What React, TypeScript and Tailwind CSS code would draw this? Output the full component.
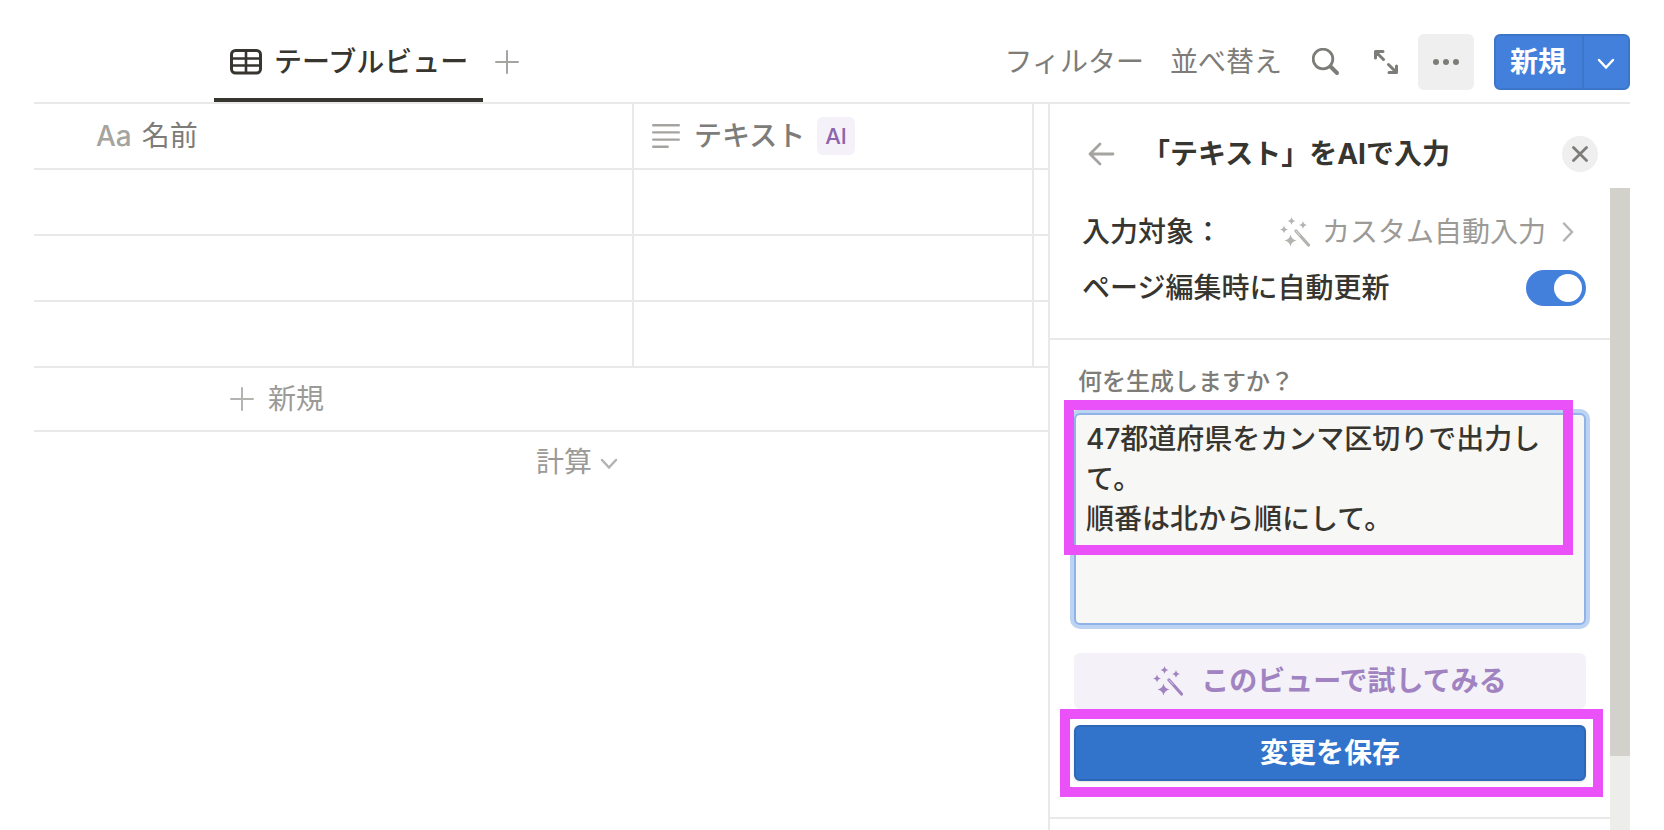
import React, { useState } from 'react';

const ROWS = [1, 2, 3];

function TableIcon() {
  return (
    <svg viewBox="0 0 32 26" className="h-[26px] w-8" fill="none" stroke="currentColor" strokeWidth="3">
      <rect x="1.5" y="1.5" width="29" height="22.5" rx="4" />
      <path d="M2 9.5h28M2 16.5h28M16 2v22" strokeWidth="2.6" />
    </svg>
  );
}

function PlusIcon() {
  return (
    <svg viewBox="0 0 24 24" className="size-6" fill="none" stroke="currentColor" strokeWidth="2" strokeLinecap="round">
      <path d="M12 1v22M1 12h22" />
    </svg>
  );
}

function ChevronDown({ className = '' }: { className?: string }) {
  return (
    <svg viewBox="0 0 18 12" className={`h-3 w-[18px] ${className}`} fill="none" stroke="currentColor" strokeLinecap="round">
      <path d="M2 2l7 7.5L16 2" />
    </svg>
  );
}

function WandIcon() {
  return (
    <svg viewBox="0 0 30 30" className="size-[30px] shrink-0" fill="currentColor">
      <path d="M11.5 0q.6 3.4 4 4q-3.4.6-4 4q-.6-3.4-4-4q3.4-.6 4-4z" />
      <path d="M23 4q.6 3.4 4 4q-3.4.6-4 4q-.6-3.4-4-4q3.4-.6 4-4z" />
      <path d="M4 8.500q.6 3.400 4 4q-3.400.6-4 4q-.6-3.400-4-4q3.400-.6 4-4z" />
      <path d="M10.500 17.500q1 5 6 6q-5 1-6 6q-1-5-6-6q5-1 6-6z" />
      <path d="M16 14L28.500 28" fill="none" stroke="currentColor" strokeWidth="3.200" strokeLinecap="round" />
      <path d="M16 14L20 18.500" fill="none" stroke="white" strokeOpacity=".6" strokeWidth="1" strokeLinecap="round" />
    </svg>
  );
}

function Toolbar() {
  return (
    <header className="flex h-[104px] items-center border-b-2 border-[#e9e9e7] pt-[22px]">
      <div className="ml-[180px] flex h-full flex-col">
        <button className="flex flex-1 items-center gap-3 border-b-4 border-[#37352f] pt-1 pr-[15px] pl-4 font-medium">
          <TableIcon />
          テーブルビュー
        </button>
      </div>
      <button aria-label="ビューを追加" className="ml-3 text-[#a5a4a0]">
        <PlusIcon />
      </button>

      <div className="ml-auto flex items-center text-[#7d7c78]">
        <button>フィルター</button>
        <button className="ml-[26px]">並べ替え</button>
        <button aria-label="検索" className="ml-[30px]">
          <svg viewBox="0 0 28 28" className="size-7" fill="none" stroke="currentColor" strokeLinecap="round">
            <circle cx="11" cy="11" r="9.800" strokeWidth="2.800" />
            <path d="M18.500 18.500l6.500 6.500" strokeWidth="4" />
          </svg>
        </button>
        <button aria-label="全画面で開く" className="ml-[34px]">
          <svg viewBox="0 0 24 24" className="size-6" fill="none" stroke="currentColor" strokeWidth="3" strokeLinecap="round" strokeLinejoin="round">
            <path d="M9.500 9.500L2 2M1.500 8V1.500H9M14.500 14.500L22 22M22.500 16v6.500H15" />
          </svg>
        </button>
        <button aria-label="その他" className="ml-5 flex size-14 items-center justify-center rounded-md bg-[#efefef]">
          <svg viewBox="0 0 26 6" className="h-1.5 w-[26px]" fill="currentColor">
            <circle cx="3" cy="3" r="3" />
            <circle cx="13" cy="3" r="3" />
            <circle cx="23" cy="3" r="3" />
          </svg>
        </button>
        <div className="ml-5 flex h-14 overflow-hidden rounded-md border-2 border-[#3b76c9] bg-[#4380dc] text-white">
          <button className="pr-4 pl-3.5 font-bold">新規</button>
          <button aria-label="テンプレートを選択" className="flex w-[46px] items-center justify-center border-l-2 border-[#3b76c9]">
            <ChevronDown className="mt-1 stroke-[2.5]" />
          </button>
        </div>
      </div>
    </header>
  );
}

function Database() {
  return (
    <table className="w-full table-fixed border-separate border-spacing-0 text-left">
      <colgroup>
        <col className="w-[600px]" />
        <col className="w-[400px]" />
        <col />
      </colgroup>
      <thead className="text-[#7d7c78]">
        <tr>
          <th className="h-[66px] border-r-2 border-b-2 border-[#e9e9e7] pl-[62px] font-normal">
            <div className="flex items-center gap-2.5">
              <span className="font-medium text-[#a5a4a0]">Aa</span>
              名前
            </div>
          </th>
          <th className="border-r-2 border-b-2 border-[#e9e9e7] pl-[18px] font-medium">
            <div className="flex items-center">
              <svg viewBox="0 0 28 24" className="h-6 w-7 text-[#a5a4a0]" fill="none" stroke="currentColor" strokeWidth="2.4" strokeLinecap="round">
                <path d="M1.2 1.2h25.6M1.2 8.4h25.6M1.2 15.6h25.6M1.2 22.8h14.5" />
              </svg>
              <span className="ml-3.5">テキスト</span>
              <span className="ml-3 rounded-md bg-[#f4f1f8] px-2 py-1 text-[22px] leading-[30px] text-[#8d64ad]">AI</span>
            </div>
          </th>
          <th className="border-b-2 border-[#e9e9e7]" />
        </tr>
      </thead>
      <tbody>
        {ROWS.map((row) => (
          <tr key={row}>
            <td className="h-[66px] border-r-2 border-b-2 border-[#e9e9e7]" />
            <td className="border-r-2 border-b-2 border-[#e9e9e7]" />
            <td className="border-b-2 border-[#e9e9e7]" />
          </tr>
        ))}
      </tbody>
      <tfoot className="text-[#9b9a97]">
        <tr>
          <td colSpan={3} className="h-16 border-b-2 border-[#e9e9e7] pl-[196px]">
            <button className="flex items-center gap-3.5">
              <span className="text-[#b4b3b0]">
                <PlusIcon />
              </span>
              新規
            </button>
          </td>
        </tr>
        <tr>
          <td className="h-[60px] pr-4">
            <button className="ml-auto flex items-center gap-2">
              計算
              <ChevronDown className="mt-1 stroke-[2.5] text-[#b4b3b0]" />
            </button>
          </td>
          <td colSpan={2} />
        </tr>
      </tfoot>
    </table>
  );
}

function AutofillPanel() {
  const [autoUpdate, setAutoUpdate] = useState(true);
  const [prompt, setPrompt] = useState('47都道府県をカンマ区切りで出力して。\n順番は北から順にして。');

  return (
    <aside className="flex w-[582px] shrink-0 flex-col border-l-2 border-[#e9e9e7]">
      <div className="flex h-[84px] shrink-0 items-center pt-4 pr-8 pl-[38px]">
        <button aria-label="戻る" className="text-[#a5a4a0]">
          <svg viewBox="0 0 28 24" className="h-6 w-7" fill="none" stroke="currentColor" strokeWidth="2.8" strokeLinecap="round" strokeLinejoin="round">
            <path d="M25 12H2M12 2L2 12l10 10" />
          </svg>
        </button>
        <h2 className="ml-[26px] font-bold">「テキスト」をAIで入力</h2>
        <button aria-label="閉じる" className="ml-auto flex size-9 items-center justify-center rounded-full bg-[#efefef] text-[#7d7c78]">
          <svg viewBox="0 0 16 16" className="size-4" fill="none" stroke="currentColor" strokeWidth="2.8" strokeLinecap="round">
            <path d="M1.5 1.5l13 13M14.5 1.5l-13 13" />
          </svg>
        </button>
      </div>

      <div className="flex flex-1">
        <div className="min-w-0 flex-1">
          <section className="border-b-2 border-[#e9e9e7] pt-4 pr-6 pb-[22px] pl-8">
            <div className="flex h-14 items-center">
              <span className="font-medium">入力対象：</span>
              <button className="ml-auto flex items-center pr-3 text-[#9b9a97]">
                <span className="text-[#b4b3b0]">
                  <WandIcon />
                </span>
                <span className="ml-3">カスタム自動入力</span>
                <svg viewBox="0 0 12 20" className="ml-4 h-5 w-3 text-[#b4b3b0]" fill="none" stroke="currentColor" strokeWidth="2.4" strokeLinecap="round">
                  <path d="M2 1.5L10 10l-8 8.5" />
                </svg>
              </button>
            </div>
            <label className="flex h-14 items-center justify-between font-medium">
              ページ編集時に自動更新
              <input
                type="checkbox"
                role="switch"
                checked={autoUpdate}
                onChange={(e) => setAutoUpdate(e.target.checked)}
                className="flex h-9 w-[60px] appearance-none rounded-full bg-[#d3d2ce] p-1 before:size-7 before:rounded-full before:bg-white checked:justify-end checked:bg-[#4380dc]"
              />
            </label>
          </section>

          <section className="border-b-2 border-[#e9e9e7] px-6 pt-6 pb-9">
            <label htmlFor="prompt" className="block px-1 text-2xl leading-9 font-medium text-[#7d7c78]">
              何を生成しますか？
            </label>
            <div className="relative mt-[13px]">
              <textarea
                id="prompt"
                value={prompt}
                onChange={(e) => setPrompt(e.target.value)}
                className="block h-[212px] w-full resize-none rounded-md border-2 border-[#8fb3e8] bg-[#f7f7f5] px-2.5 py-1 leading-10 font-medium ring-4 ring-[#bdd3f2] outline-none"
              />
              <div className="pointer-events-none absolute -top-[13px] right-[13px] -left-2.5 h-[155px] border-10 border-[#ea51f8]" />
            </div>
            <button className="mt-7 flex h-14 w-full items-center justify-center gap-[18px] rounded-md bg-[#f4f1f8] font-bold text-[#a083c0]">
              <WandIcon />
              このビューで試してみる
            </button>
            <div className="relative mt-4">
              <button className="h-14 w-full rounded-md border-2 border-[#2c67b8] bg-[#3273cb] font-bold text-white shadow-sm">
                変更を保存
              </button>
              <div className="pointer-events-none absolute -top-4 -right-[17px] -bottom-4 -left-3.5 border-10 border-[#ea51f8]" />
            </div>
          </section>
        </div>
        <div className="w-5 bg-[#edede9]">
          <div className="h-[568px] bg-[#d2d1cb]" />
        </div>
      </div>
    </aside>
  );
}

export default function App() {
  return (
    <div
      lang="ja"
      className="flex min-h-screen flex-col bg-white px-[34px] font-['Inter','Noto_Sans_CJK_JP',sans-serif] text-[28px] leading-10 text-[#37352f]"
    >
      <Toolbar />
      <div className="flex flex-1">
        <main className="min-w-0 flex-1">
          <Database />
        </main>
        <AutofillPanel />
      </div>
    </div>
  );
}
